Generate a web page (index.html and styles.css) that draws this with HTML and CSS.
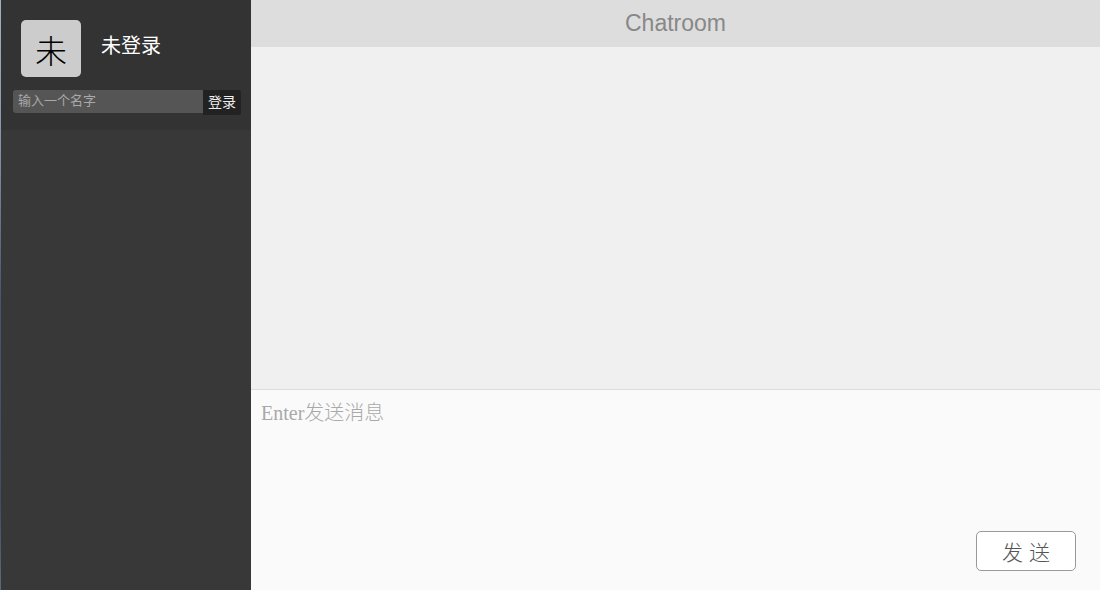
FILE: index.html
```html
<!DOCTYPE html>
<html lang="zh-CN">
<head>
<meta charset="utf-8">
<title>Chatroom</title>
<link rel="stylesheet" href="styles.css">
</head>
<body>
<div class="app">
  <aside class="sidebar">
    <div class="profile">
      <div class="identity">
        <div class="avatar">未</div>
        <div class="username">未登录</div>
      </div>
      <form class="login">
        <input class="login-name" type="text" placeholder="输入一个名字" aria-label="输入一个名字">
        <button class="login-button" type="button">登录</button>
      </form>
    </div>
  </aside>
  <main class="chat">
    <header class="chat-header">Chatroom</header>
    <section class="messages"></section>
    <form class="composer">
      <textarea class="composer-text" placeholder="Enter发送消息" aria-label="Enter发送消息"></textarea>
      <button class="send-button" type="button">发 送</button>
    </form>
  </main>
</div>
</body>
</html>
```
FILE: styles.css
```css
* {
  box-sizing: border-box;
}

body {
  margin: 0;
  font-family: "Liberation Sans", "Noto Sans CJK SC", sans-serif;
}

input,
button,
textarea {
  margin: 0;
  border: 0;
  font-family: inherit;
}

.app {
  display: flex;
  height: 100vh;
}

.sidebar {
  flex: 0 0 251px;
  border-left: 1px solid;
  border-image: linear-gradient(#a3b1bf, #8495a8 25%, #4c5372 50%, #454a66 85%, #626a76) 1;
  background: #383838;
}

.profile {
  padding: 20px 10px 15px 12px;
  background: #333;
}

.identity {
  display: flex;
  gap: 20px;
  padding-left: 8px;
}

.avatar {
  width: 60px;
  height: 57px;
  border-radius: 5px;
  background: #ccc;
  color: #000;
  font-size: 32px;
  font-weight: 300;
  line-height: 64px;
  text-align: center;
}

.username {
  color: #fff;
  font-size: 20px;
  font-weight: 400;
  line-height: 52px;
}

.login {
  display: flex;
  align-items: flex-start;
  margin-top: 13px;
}

.login-name {
  flex: 1;
  min-width: 0;
  height: 23px;
  padding: 0 5px 2px;
  border-radius: 3px 0 0 3px;
  background: #555;
  color: #fff;
  font-size: 13px;
}

.login-name::placeholder {
  color: #a9a9a9;
}

.login-button {
  flex: 0 0 38px;
  height: 25px;
  padding: 0;
  border-radius: 0 3px 3px 0;
  background: #222;
  color: #eee;
  font-size: 14px;
  line-height: 25px;
}

.chat {
  display: flex;
  flex: 1;
  flex-direction: column;
  min-width: 0;
}

.chat-header {
  background: #ddd;
  color: #888;
  font-size: 23px;
  line-height: 47px;
  text-align: center;
}

.messages {
  flex: 1;
  background: #f0f0f0;
}

.composer {
  display: flex;
  flex-direction: column;
  height: 201px;
  padding: 8px 24px 19px 10px;
  border-top: 1px solid #ddd;
  background: #fafafa;
}

.composer-text {
  flex: 1;
  padding: 0;
  resize: none;
  outline: 0;
  background: transparent;
  color: #333;
  font-family: "Liberation Serif", "Noto Sans CJK SC", serif;
  font-size: 20px;
  font-weight: 300;
  line-height: 30px;
}

.composer-text::placeholder {
  color: #a9a9a9;
}

.send-button {
  align-self: flex-end;
  width: 100px;
  height: 40px;
  padding: 0;
  border: 1px solid #999;
  border-radius: 5px;
  background: #fff;
  color: #555;
  font-size: 21px;
  font-weight: 300;
}
```
